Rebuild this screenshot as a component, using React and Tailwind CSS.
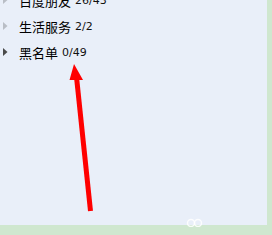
import React from 'react';

const groups = [
  { name: '百度朋友', count: '26/43', dim: true },
  { name: '生活服务', count: '2/2', dim: true },
  { name: '黑名单', count: '0/49', dim: false },
];

const Row = ({ name, count, dim }) => (
  <div className="flex items-center h-[26px]">
    <svg width="19" height="26" viewBox="0 0 19 26" className="shrink-0">
      <path d="M3 9 L7.5 13 L3 17 Z" fill={dim ? '#b9bec6' : '#4a4a4a'} />
    </svg>
    <span className="text-[13px] text-black leading-none">{name}</span>
    <span className="ml-[4px] text-[11px] text-[#111] leading-none font-['DejaVu_Sans']">{count}</span>
  </div>
);

export default function App() {
  return (
    <div className="w-[272px] h-[235px] bg-[#cfe7cf] relative overflow-hidden font-['Noto_Sans_CJK_SC',sans-serif]">
      <div className="w-[267px] h-[225px] bg-[#e9eff9] overflow-hidden">
        <div className="flex flex-col mt-[-13px]">
          {groups.map((g) => (
            <Row key={g.name} {...g} />
          ))}
        </div>
      </div>

      {/* annotation arrow */}
      <svg className="absolute left-0 top-0" width="272" height="235" viewBox="0 0 272 235">
        <line x1="76.5" y1="77" x2="90.5" y2="211" stroke="#ff0000" strokeWidth="5" />
        <path d="M74 64 L83 80 L69.5 80 Z" fill="#ff0000" />
      </svg>

      {/* faint watermark */}
      <svg className="absolute left-[186px] top-[218px]" width="18" height="9" viewBox="0 0 18 9">
        <circle cx="5" cy="5" r="3.5" fill="none" stroke="#ffffff" strokeWidth="1.5" opacity="0.85" />
        <circle cx="12" cy="5" r="3.5" fill="none" stroke="#ffffff" strokeWidth="1.5" opacity="0.85" />
      </svg>
    </div>
  );
}
